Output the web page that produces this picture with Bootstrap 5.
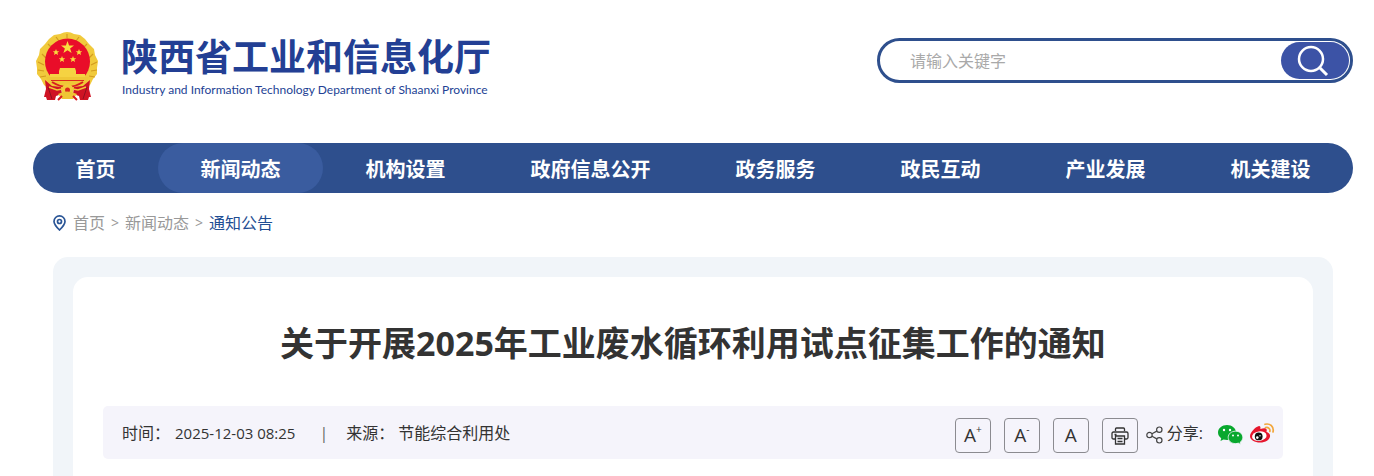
<!DOCTYPE html>
<html lang="zh-CN">
<head>
<meta charset="utf-8">
<meta name="viewport" content="width=device-width, initial-scale=1">
<title>关于开展2025年工业废水循环利用试点征集工作的通知</title>
<link href="https://cdn.jsdelivr.net/npm/bootstrap@5.3.0/dist/css/bootstrap.min.css" rel="stylesheet">
<style>
  body { font-family: "Open Sans", "Noto Sans CJK SC", sans-serif; font-size: 16px; line-height: 24px; color: #333; background: #fff; }
  a { color: inherit; text-decoration: none; }
  .page-shell { padding: 0 21px 0 33px; }
  .site-head { padding-top: 32px; height: 143px; }
  .brand { color: #233f94; padding-left: 3px; }
  .brand-text { padding-left: 22px; }
  .brand-cn { font-size: 37px; line-height: 46px; font-weight: 700; font-family: "Noto Sans CJK SC", sans-serif; }
  .brand-en { font-family: Lato, sans-serif; font-size: 12px; line-height: 24px; padding-left: 1px; }
  .search-box { width: 476px; height: 45px; margin-top: 6px; border: 3px solid #2e4f8d; border-radius: 23px; padding: 1px; background: #fff; }
  .search-box input { border: 0; padding: 0 0 0 29px; font-size: 16px; background: transparent; box-shadow: none; }
  .search-box input::placeholder { color: #a9a9a9; }
  .search-box button { width: 68px; border: 0; border-radius: 19px; background: #3c53a6; padding: 0 4px 0 0; }
  .main-nav { background: #2e4f8d; border-radius: 25px; }
  .main-nav .nav-link { color: #fff; font-size: 20px; line-height: 46px; font-weight: 700; padding: 4px 0 0; border-radius: 25px; }
  .main-nav .nav-link.active { background: #3a5c9f; }
  .crumbs { padding: 18px 0 22px 20px; color: #999; }
  .crumbs svg { margin-right: 7px; }
  .crumbs small { margin: 0 6px; font-size: 14px; }
  .crumbs .here { color: #1f4e93; }
  .sheet-outer { margin: 0 20px; padding: 20px 20px 0; background: #f1f5f9; border-radius: 15px 15px 0 0; }
  .sheet { background: #fff; border-radius: 15px 15px 0 0; padding: 42px 30px 40px; }
  .sheet h1 { font-size: 34px; line-height: 48px; font-weight: 700; margin-bottom: 39px; }
  .meta-bar { background: #f5f4fb; border-radius: 5px; padding: 0 8px 0 19px; min-height: 53px; }
  .stamp { font-size: 15px; margin-left: 5px; }
  .meta-sep { margin: 0 18px 0 24px; color: #666; }
  .tools { gap: 13px; padding-top: 6px; }
  .tool { width: 36px; height: 35px; border: 1px solid #8b8b90; border-radius: 4px; background: transparent; padding: 0; color: #333; font-size: 19px; line-height: 33px; }
  .tool sup { font-size: 10px; line-height: 0; top: -9px; }
  .share-wechat { margin-left: 15px; }
  .share-weibo { margin-left: 7px; }
</style>
</head>
<body>
<div class="page-shell">
  <header class="site-head d-flex justify-content-between align-items-start">
    <a class="brand d-flex align-items-start" href="#">
      <svg width="63" height="70" viewBox="0 0 63 70" aria-hidden="true">
        <path d="M31 0q4 0 7 2l6 1 5 4 4 5 5 5 1 6 3 6-1 7 0 6-4 5-3 6-5 4H13l-5-4-3-6-4-5 0-6-1-7 3-6 1-6 5-5 4-5 5-4 6-1Q28 0 31 0Z" fill="#f1ca3c"/>
        <path d="M6 22l4 4M2 30l6 3M2 38l6 1M4 45l6-1M57 22l-4 4M61 30l-6 3M61 38l-6 1M59 45l-6-1M12 12l4 4M51 12l-4 4M20 5l3 4M43 5l-3 4M31 2v4" stroke="#d39b20" stroke-width="1.200" fill="none"/>
        <ellipse cx="31.500" cy="29.500" rx="22.500" ry="23" fill="#e90d29"/>
        <path d="M31.500 9l1.600 4.500h4.900l-3.900 2.900 1.500 4.600-4.100-2.800-4.100 2.800 1.500-4.600-3.900-2.900h4.900z" fill="#f8dd3f"/>
        <g fill="#f8dd3f"><path id="small-star" d="M20 17l.9 2.200h2.300l-1.800 1.500.7 2.300-2.100-1.300-2.100 1.300.7-2.300-1.800-1.500h2.300z"/><use href="#small-star" x="23"/><use href="#small-star" x="6" y="7"/><use href="#small-star" x="17" y="7"/></g>
        <path d="M24 36h15l1 3v3h9v3H14v-3h9v-3z" fill="#f5d342"/>
        <path d="M10 45h43l-3 6-8 5-10 4-11-4-8-5z" fill="#efc737"/>
        <path d="M15 48h33v1H15z" fill="#dd2a1c"/>
        <path d="M16 50q8 5 15.500 5T47 50" fill="none" stroke="#d91c20" stroke-width="2"/>
        <path d="M9 48l7 6 9 1 1 7-6 2-1 4-8 0-1-3-2 0 2-8zM54 48l-7 6-9 1-1 7 6 2 1 4 8 0 1-3 2 0-2-8z" fill="#cf1324"/>
        <path d="M12 55l4 12M51 55l-4 12" stroke="#8f1020" stroke-width="1" fill="none"/>
        <path d="M13 55l8 3 5-1M50 55l-8 3-5-1" stroke="#f1c637" stroke-width="1.500" fill="none"/>
        <circle cx="31.500" cy="58" r="6" fill="#f2cb3b"/><circle cx="31.500" cy="58" r="2.500" fill="#d92a1c"/>
        <path d="M22 62q9-5 19 0l-4 5H26z" fill="#efc534"/><path d="M26 64l-4 4M37 64l4 4" stroke="#d91c20" stroke-width="2"/>
      </svg>
      <span class="brand-text">
        <span class="brand-cn d-block">陕西省工业和信息化厅</span>
        <span class="brand-en d-block">Industry and Information Technology Department of Shaanxi Province</span>
      </span>
    </a>
    <form class="search-box d-flex" role="search">
      <input class="form-control" type="text" placeholder="请输入关键字" aria-label="请输入关键字">
      <button type="button" class="flex-shrink-0" aria-label="搜索"><svg width="34" height="34" viewBox="0 0 34 34" fill="none" stroke="#fff" stroke-width="2.500"><circle cx="15" cy="15" r="12"/><path d="M24 24l7 7" stroke-width="3"/></svg></button>
    </form>
  </header>
  <nav class="main-nav nav nav-fill flex-nowrap">
    <a class="nav-link nav-item" href="#">首页</a>
    <a class="nav-link nav-item active" href="#">新闻动态</a>
    <a class="nav-link nav-item" href="#">机构设置</a>
    <a class="nav-link nav-item" href="#">政府信息公开</a>
    <a class="nav-link nav-item" href="#">政务服务</a>
    <a class="nav-link nav-item" href="#">政民互动</a>
    <a class="nav-link nav-item" href="#">产业发展</a>
    <a class="nav-link nav-item" href="#">机关建设</a>
  </nav>
  <div class="crumbs d-flex align-items-center">
    <svg width="13" height="16" viewBox="0 0 13 16" fill="none" stroke="#2a5596" stroke-width="1.700"><path d="M6.500 15C3 11.500 1 9 1 6.400a5.500 5.500 0 0 1 11 0C12 9 10 11.500 6.500 15Z"/><circle cx="6.500" cy="6.500" r="2"/></svg>
    <a href="#">首页</a><small>&gt;</small><a href="#">新闻动态</a><small>&gt;</small><a class="here" href="#">通知公告</a>
  </div>
  <main class="sheet-outer">
    <article class="sheet">
      <h1 class="text-center">关于开展2025年工业废水循环利用试点征集工作的通知</h1>
      <div class="meta-bar d-flex justify-content-between align-items-center">
        <div class="d-flex align-items-center">
          <span>时间：</span><span class="stamp">2025-12-03 08:25</span><span class="meta-sep">|</span><span>来源：</span><span class="ms-1">节能综合利用处</span>
        </div>
        <div class="d-flex align-items-center">
          <div class="tools d-flex">
            <button class="tool" type="button">A<sup>+</sup></button>
            <button class="tool" type="button">A<sup>-</sup></button>
            <button class="tool" type="button">A</button>
            <button class="tool" type="button" aria-label="打印"><svg class="d-block mx-auto" width="18" height="18" viewBox="0 0 18 18" fill="none" stroke="#333" stroke-width="1.300"><path d="M4.500 4V2q0-1 1-1h7q1 0 1 1v2M4 12H2.500q-1.500 0-1.500-1.500v-4Q1 5 2.500 5h13Q17 5 17 6.500v4q0 1.500-1.500 1.500H14"/><path d="M4.500 9h9v8h-9zM6.500 11.500h5M6.500 14.500h5M3.500 7.500h2"/></svg></button>
          </div>
          <svg class="ms-2 mt-1" width="17" height="18" viewBox="0 0 17 18" fill="none" stroke="#444" stroke-width="1.200"><circle cx="3.500" cy="9" r="2.700"/><circle cx="13.300" cy="3.700" r="2.700"/><circle cx="13.300" cy="14.300" r="2.700"/><path d="M6 7.700l4.800-2.600M6 10.300l4.800 2.600"/></svg>
          <span class="ms-1">分享:</span>
          <a href="#" class="share-wechat d-flex mt-1" aria-label="微信"><svg width="25" height="20" viewBox="0 0 25 20"><path d="M9 0C4 0 0 3.200 0 7.500c0 2.400 1.300 4.400 3.200 5.700L2.500 16l3-1.500c1 .3 2.300.5 3.500.5 5 0 9-3.200 9-7.500S14 0 9 0Z" fill="#09a82e"/><path d="M17.500 6.200c-4.200 0-7.300 2.700-7.300 6.200s3.100 6.200 7.300 6.200c1 0 2-.2 2.800-.5L22.800 19.600l-.6-2.400c1.600-1.100 2.600-2.800 2.600-4.800 0-3.500-3.100-6.200-7.300-6.200Z" fill="#09a82e" stroke="#f5f4fb" stroke-width=".8"/><g fill="#fff"><circle cx="6" cy="5" r="1.200"/><circle cx="12" cy="5" r="1.200"/><circle cx="15" cy="10.500" r="1"/><circle cx="20" cy="10.500" r="1"/></g></svg></a>
          <a href="#" class="share-weibo d-flex" aria-label="微博"><svg width="25" height="20" viewBox="0 0 25 20"><path d="M8.500 3.200c1.600-.4 2.300.8 1.900 2.800 3-1.200 5.900-1.300 6.300.7.200.9-.3 1.600-.2 2 .2.500 3.800 1.200 3.600 4.300-.2 3.600-4.600 6.600-10 6.600S0 17 0 13.300c0-3.800 5.300-9.400 8.500-10.100Z" fill="#e6162d"/><ellipse cx="9.300" cy="13.200" rx="7.300" ry="4.800" fill="#fff" transform="rotate(-8 9.300 13.200)"/><circle cx="8.700" cy="13.400" r="3.900" fill="#111"/><circle cx="7.300" cy="14.600" r="1.300" fill="#fff"/><circle cx="10" cy="12.700" r=".7" fill="#fff"/><path d="M15 1.300c5-1.300 9.300 2.500 8 7.700M15.500 4.500c2.900-.6 5 1.500 4.300 4" fill="none" stroke="#f2a63a" stroke-width="1.700" stroke-linecap="round"/></svg></a>
        </div>
      </div>
    </article>
  </main>
</div>
<script src="https://cdn.jsdelivr.net/npm/bootstrap@5.3.0/dist/js/bootstrap.bundle.min.js"></script>
</body>
</html>
